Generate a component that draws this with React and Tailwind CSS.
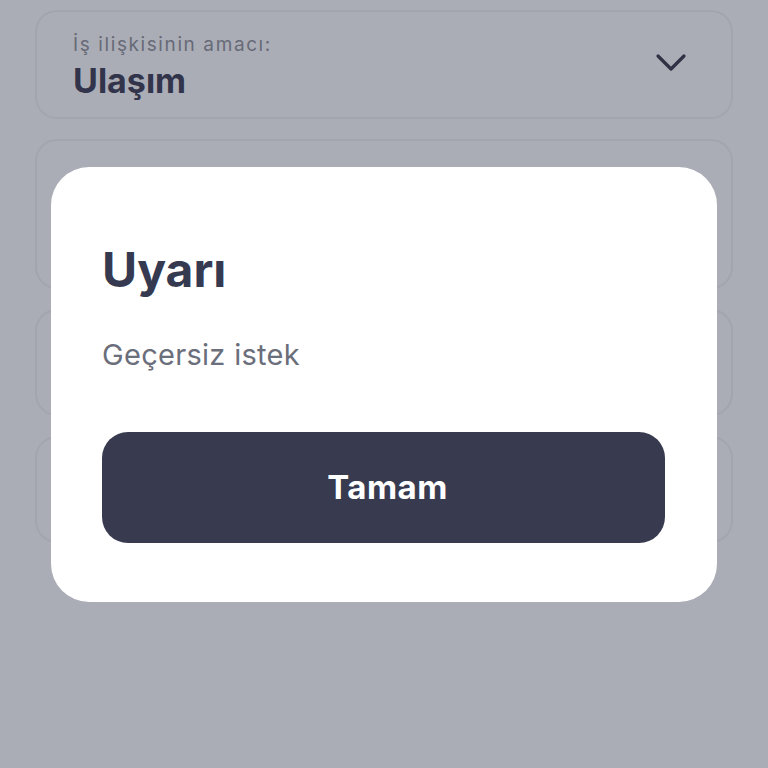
import React from "react";

function Chevron() {
  return (
    <svg width="32" height="20" viewBox="0 0 32 20" fill="none">
      <path d="M3 3 L16 16 L29 3" stroke="#2f3245" strokeWidth="3.2" strokeLinecap="round" strokeLinejoin="round" />
    </svg>
  );
}

export default function App() {
  return (
    <div
      className="relative w-[768px] h-[768px] overflow-hidden bg-[#abadb6]"
      style={{ fontFamily: "Inter, 'Noto Sans', sans-serif" }}
    >
      <div className="flex flex-col gap-[20px] pt-[10px] pl-[35px] pr-[35px]">
        <div className="h-[109px] rounded-[22px] border-2 border-[#a2a5ae] flex items-start justify-between pl-[36px] pr-[44px]">
          <div className="flex flex-col pt-[22px]">
            <span className="text-[19px] leading-[22px] tracking-[1.6px] text-[#676a77]">İş ilişkisinin amacı:</span>
            <span className="text-[34px] leading-[40px] font-bold text-[#31344a] mt-[5px]">Ulaşım</span>
          </div>
          <div className="mt-[41px]">
            <Chevron />
          </div>
        </div>
        <div className="h-[150px] rounded-[22px] border-2 border-[#a2a5ae]" />
        <div className="h-[107px] rounded-[22px] border-2 border-[#a2a5ae]" />
        <div className="h-[107px] rounded-[22px] border-2 border-[#a2a5ae]" />
      </div>

      <div className="absolute left-[51px] top-[167px] w-[666px] h-[435px] bg-white rounded-[38px] px-[51px] pt-[75px]">
        <h1 className="text-[48px] leading-[56px] font-bold text-[#363a50]">Uyarı</h1>
        <p className="mt-[40px] text-[29px] leading-[34px] tracking-[0.3px] text-[#6b6e7b]">Geçersiz istek</p>
        <button className="mt-[60px] w-[563px] h-[111px] pl-[8px] rounded-[26px] bg-[#383b50] text-white text-[33px] tracking-[0.5px] font-bold">
          Tamam
        </button>
      </div>
    </div>
  );
}
